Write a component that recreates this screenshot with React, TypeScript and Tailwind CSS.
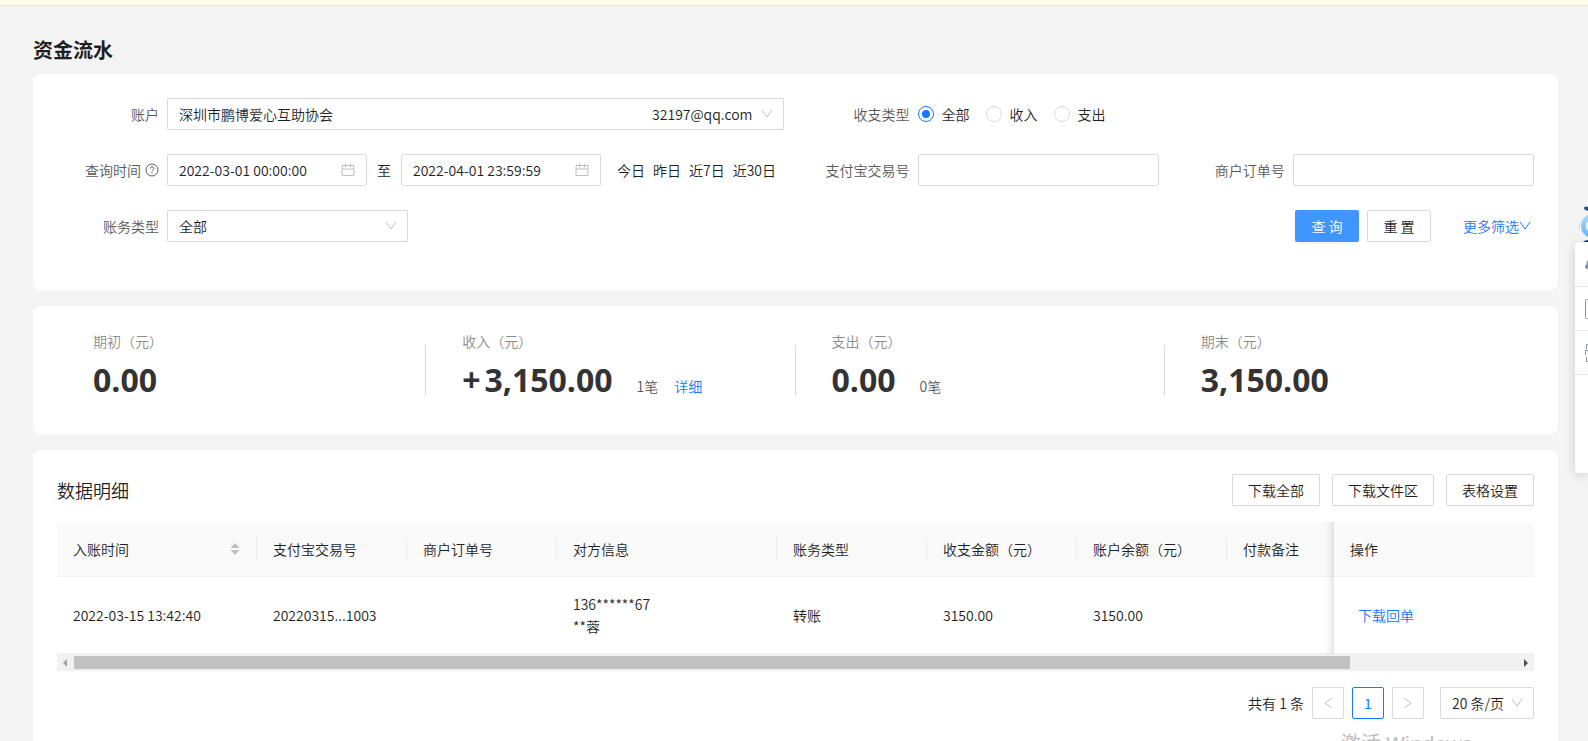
import { useState, type ReactNode } from "react";

const PERIODS = ["今日", "昨日", "近7日", "近30日"];

const FLOW_TYPES = [
  { value: "all", label: "全部" },
  { value: "in", label: "收入" },
  { value: "out", label: "支出" },
];

interface Stat {
  label: string;
  sign?: string;
  value: string;
  count?: string;
  detail?: boolean;
}

const STATS: Stat[] = [
  { label: "期初（元）", value: "0.00" },
  { label: "收入（元）", sign: "+", value: "3,150.00", count: "1笔", detail: true },
  { label: "支出（元）", value: "0.00", count: "0笔" },
  { label: "期末（元）", value: "3,150.00" },
];

const COLUMNS = [
  { title: "入账时间", width: "w-[200px]", sortable: true },
  { title: "支付宝交易号", width: "w-[150px]" },
  { title: "商户订单号", width: "w-[150px]" },
  { title: "对方信息", width: "w-[220px]" },
  { title: "账务类型", width: "w-[150px]" },
  { title: "收支金额（元）", width: "w-[150px]" },
  { title: "账户余额（元）", width: "w-[150px]" },
  { title: "付款备注", width: "w-[300px]" },
];

const FIELD = "h-8 rounded-xs border border-[#d9d9d9] bg-white";
const BUTTON = "h-8 rounded-xs border border-[#d9d9d9] bg-white px-[15px] shadow-[0_2px_0_rgba(0,0,0,0.02)]";
const FIXED_SHADOW =
  "after:pointer-events-none after:absolute after:inset-y-0 after:-left-[30px] after:-bottom-px after:w-[30px] after:shadow-[inset_-10px_0_8px_-8px_rgba(0,0,0,0.15)] after:content-['']";

function Chevron({ className }: { className?: string }) {
  return (
    <svg viewBox="0 0 12 12" className={`pointer-events-none h-3 w-3 ${className ?? ""}`} fill="none" stroke="currentColor">
      <path d="M1 2 6 9 11 2" />
    </svg>
  );
}

function CalendarIcon() {
  return (
    <svg viewBox="0 0 14 14" className="h-3.5 w-3.5 text-[#bfbfbf]" fill="none" stroke="currentColor">
      <path d="M1 2.5h12v10H1zM1 6h12M4.5 .5v4M9.500.5v4" />
    </svg>
  );
}

function HelpIcon() {
  return (
    <svg viewBox="0 0 14 14" className="h-3.5 w-3.5" fill="none" stroke="currentColor">
      <circle cx="7" cy="7" r="6" />
      <path d="M5.1 5.6C5.1 4.4 6 3.8 7 3.8s1.9.7 1.9 1.7C8.9 6.8 7 6.8 7 8.3M7 9.3v1.2" />
    </svg>
  );
}

function Field({ label, htmlFor, help, children }: { label: string; htmlFor?: string; help?: boolean; children: ReactNode }) {
  return (
    <>
      <label htmlFor={htmlFor} className="flex w-[110px] shrink-0 items-center justify-end gap-1 pr-2 text-[#595959]">
        {label}
        {help && <HelpIcon />}
      </label>
      {children}
    </>
  );
}

function DateInput({ id, value, label }: { id: string; value: string; label: string }) {
  return (
    <div className={`${FIELD} flex w-[200px] items-center px-[11px]`}>
      <input id={id} aria-label={label} defaultValue={value} className="min-w-0 flex-1 outline-none" />
      <CalendarIcon />
    </div>
  );
}

function SideTools() {
  return (
    <aside className="absolute top-[205px] right-0 w-[13px]">
      <svg viewBox="0 0 13 37" className="block h-[37px] w-[13px]">
        <defs>
          <linearGradient id="face" x1="0" y1="0" x2="0" y2="1">
            <stop offset="0" stopColor="#a9dcff" />
            <stop offset="1" stopColor="#66b1f6" />
          </linearGradient>
        </defs>
        <path d="M9 3Q9 1.500 10.500 1.500L13 2V6L10.500 5Q9 4.500 9 3Z" fill="#2b5180" />
        <rect x="4" y="18" width="1" height="7" fill="#f6dc6f" />
        <rect x="5" y="17" width="2" height="9" rx="1" fill="#fff" />
        <circle cx="18" cy="21" r="12" fill="url(#face)" />
        <rect x="11" y="17" width="6" height="8" rx="2" fill="#e9f6ff" />
        <path d="M8 37Q10 35 13 35V37Z" fill="#1f3c68" />
      </svg>
      <div className="h-[231px] rounded-l bg-white pt-px shadow-[0_2px_12px_rgba(0,0,0,0.15)]">
        <button aria-label="通知" className="flex h-11 w-full items-center justify-end border-b border-[#e5e5e5]">
          <svg viewBox="0 0 3 14" className="h-3.5 w-[3px]" fill="#8d92a3">
            <path d="M3 2 1.500 4V6L0 8V9.500L1.500 11H3Z" />
          </svg>
        </button>
        <button aria-label="文档" className="flex h-11 w-full items-center justify-end border-b border-[#e5e5e5]">
          <svg viewBox="0 0 3 20" className="h-5 w-[3px]" fill="none" stroke="#8d92a3">
            <path d="M3 .5H1.500Q.5.5.5 1.500V18.500Q.5 19.500 1.500 19.500H3" />
          </svg>
        </button>
        <button aria-label="扫码" className="flex h-11 w-full items-center justify-end border-b border-[#e5e5e5]">
          <svg viewBox="0 0 3 18" className="h-[18px] w-[3px]" fill="none" stroke="#8d92a3">
            <path d="M3 .5H1.500V5M0 6.500H3M.5 6.500V11M1.500 13V17.500H3" />
          </svg>
        </button>
      </div>
    </aside>
  );
}

export default function App() {
  const [flowType, setFlowType] = useState("all");

  return (
    <div className="relative h-screen overflow-hidden bg-[#f4f4f4] font-['Noto_Sans_CJK_SC',sans-serif] text-sm leading-[22px] font-[350] text-[#1f1f1f]">
      <div className="h-1.5 border-b border-[#ffe58f] bg-[#fffbe6]" />

      <main className="mr-[30px] ml-[33px] flex flex-col gap-4 pt-7">
        <section>
          <h1 className="mb-2 text-xl leading-8 font-bold">资金流水</h1>
          <form className="grid grid-cols-4 gap-6 rounded-lg bg-white px-6 pt-6 pb-12" onSubmit={(e) => e.preventDefault()}>
            <div className="col-span-2 flex">
              <Field label="账户" htmlFor="account">
                <div className={`${FIELD} flex flex-1 items-center pr-2.5`}>
                  <select id="account" className="h-full flex-1 appearance-none pl-[11px] outline-none">
                    <option>深圳市鹏博爱心互助协会</option>
                  </select>
                  <span className="mr-2">32197@qq.com</span>
                  <Chevron className="text-[#bfbfbf]" />
                </div>
              </Field>
            </div>
            <div role="radiogroup" aria-labelledby="flow-label" className="col-span-2 flex items-center">
              <span id="flow-label" className="w-[110px] pr-2 text-right text-[#595959]">收支类型</span>
              {FLOW_TYPES.map((t) => (
                <label key={t.value} className="mr-4 flex items-center gap-2">
                  <input
                    type="radio"
                    name="flow"
                    checked={flowType === t.value}
                    onChange={() => setFlowType(t.value)}
                    className="grid h-4 w-4 appearance-none place-items-center rounded-full border border-[#d9d9d9] checked:border-[#1677ff] checked:before:h-2 checked:before:w-2 checked:before:rounded-full checked:before:bg-[#1677ff] checked:before:content-['']"
                  />
                  {t.label}
                </label>
              ))}
            </div>

            <div className="col-span-2 flex items-center">
              <Field label="查询时间" htmlFor="from" help>
                <DateInput id="from" label="开始时间" value="2022-03-01 00:00:00" />
                <span className="w-[34px] text-center">至</span>
                <DateInput id="to" label="结束时间" value="2022-04-01 23:59:59" />
                <div className="ml-4 flex gap-2 whitespace-nowrap">
                  {PERIODS.map((p) => (
                    <button key={p} type="button">{p}</button>
                  ))}
                </div>
              </Field>
            </div>
            <div className="flex">
              <Field label="支付宝交易号" htmlFor="trade">
                <input id="trade" className={`${FIELD} min-w-0 flex-1 px-[11px] outline-none`} />
              </Field>
            </div>
            <div className="flex">
              <Field label="商户订单号" htmlFor="order">
                <input id="order" className={`${FIELD} min-w-0 flex-1 px-[11px] outline-none`} />
              </Field>
            </div>

            <div className="flex">
              <Field label="账务类型" htmlFor="kind">
                <div className={`${FIELD} flex flex-1 items-center pr-2.5`}>
                  <select id="kind" className="h-full flex-1 appearance-none pl-[11px] outline-none">
                    <option>全部</option>
                  </select>
                  <Chevron className="text-[#bfbfbf]" />
                </div>
              </Field>
            </div>
            <div className="col-span-3 flex items-center justify-end">
              <button type="submit" className="h-8 w-16 rounded-xs bg-[#4096ff] text-white shadow-[0_2px_0_rgba(0,0,0,0.04)]">查 询</button>
              <button type="reset" className={`${BUTTON} ml-2 w-16`}>重 置</button>
              <a href="#more" className="ml-8 flex items-center pr-[3px] text-[#1677ff]">
                更多筛选
                <Chevron />
              </a>
            </div>
          </form>
        </section>

        <section className="grid grid-cols-4 rounded-lg bg-white px-6 pt-6 pb-[30px]">
          {STATS.map((s, i) => (
            <div key={s.label} className="flex">
              <div className="flex-1 pl-9">
                <div className="text-[#8c8c8c]">{s.label}</div>
                <div className="mt-1 flex h-12 items-baseline">
                  <strong className="font-['Open_Sans',sans-serif] text-[32px] leading-[48px] font-bold text-[#333]">
                    {s.sign && <span className="mr-1">{s.sign}</span>}
                    {s.value}
                  </strong>
                  {s.count && <span className="ml-6 text-[#595959]">{s.count}</span>}
                  {s.detail && <a href="#detail" className="ml-4 text-[#1677ff]">详细</a>}
                </div>
              </div>
              {i < STATS.length - 1 && <div className="mt-[15px] h-[50px] w-px bg-[#d9d9d9]" />}
            </div>
          ))}
        </section>

        <section className="rounded-lg bg-white px-6 pt-6 pb-10">
          <div className="mb-4 flex items-center gap-3">
            <h2 className="mr-auto text-lg leading-8 font-[350]">数据明细</h2>
            <button className={BUTTON}>下载全部</button>
            <button className={BUTTON}>下载文件区</button>
            <button className={BUTTON}>表格设置</button>
          </div>

          <div className="overflow-hidden">
            <table className="w-[1670px] table-fixed border-separate border-spacing-0 text-left">
              <thead>
                <tr>
                  {COLUMNS.map((c) => (
                    <th key={c.title} className={`${c.width} h-[55px] border-b border-[#f0f0f0] bg-[#fafafa] p-0 font-[350]`}>
                      <div className="flex h-[22px] items-center justify-between border-r border-[#ebebeb] px-4">
                        {c.title}
                        {c.sortable && (
                          <svg viewBox="0 0 10 14" className="h-3.5 w-2.5" fill="#bfbfbf">
                            <path d="M5 1 9.500 6H.5ZM5 13 .5 8H9.500Z" />
                          </svg>
                        )}
                      </div>
                    </th>
                  ))}
                  <th className={`${FIXED_SHADOW} sticky right-0 w-[200px] border-b border-[#f0f0f0] bg-[#fafafa] px-4 font-[350]`}>操作</th>
                </tr>
              </thead>
              <tbody>
                <tr className="*:border-b *:border-[#f0f0f0] *:bg-white *:p-4">
                  <td>2022-03-15 13:42:40</td>
                  <td>20220315...1003</td>
                  <td />
                  <td>
                    136******67
                    <br />
                    **蓉
                  </td>
                  <td>转账</td>
                  <td>3150.00</td>
                  <td>3150.00</td>
                  <td />
                  <td className={`${FIXED_SHADOW} sticky right-0`}>
                    <a href="#receipt" className="pl-2 text-[#1677ff]">下载回单</a>
                  </td>
                </tr>
              </tbody>
            </table>
          </div>

          <div className="flex h-[17px] items-center bg-[#f1f1f1]">
            <svg viewBox="0 0 17 17" className="h-[17px] w-[17px]" fill="#a3a3a3">
              <path d="M10 5v8L6 9Z" />
            </svg>
            <div className="flex-1">
              <div className="h-[13px] w-[88.4%] bg-[#c1c1c1]" />
            </div>
            <svg viewBox="0 0 17 17" className="h-[17px] w-[17px]" fill="#505050">
              <path d="M7 5v8L11 9Z" />
            </svg>
          </div>

          <div className="mt-4 flex items-center justify-end gap-2">
            <span>共有 1 条</span>
            <button aria-label="上一页" className={`${FIELD} flex w-8 items-center justify-center text-[#bfbfbf]`}>
              <Chevron className="rotate-90" />
            </button>
            <button className="h-8 w-8 rounded-xs border border-[#1677ff] font-normal text-[#1677ff]">1</button>
            <button aria-label="下一页" className={`${FIELD} flex w-8 items-center justify-center text-[#bfbfbf]`}>
              <Chevron className="-rotate-90" />
            </button>
            <div className={`${FIELD} ml-2 flex w-[94px] items-center pr-2.5`}>
              <select aria-label="每页条数" className="h-full min-w-0 flex-1 appearance-none pl-[11px] outline-none">
                <option>20 条/页</option>
              </select>
              <Chevron className="text-[#bfbfbf]" />
            </div>
          </div>
        </section>
      </main>

      <SideTools />

      <div className="pointer-events-none absolute top-[730px] left-[1341px] font-['Noto_Sans','Noto_Sans_CJK_SC',sans-serif] text-xl leading-7 font-normal whitespace-nowrap text-[#bdbdbd]">
        激活 Windows
      </div>
    </div>
  );
}
